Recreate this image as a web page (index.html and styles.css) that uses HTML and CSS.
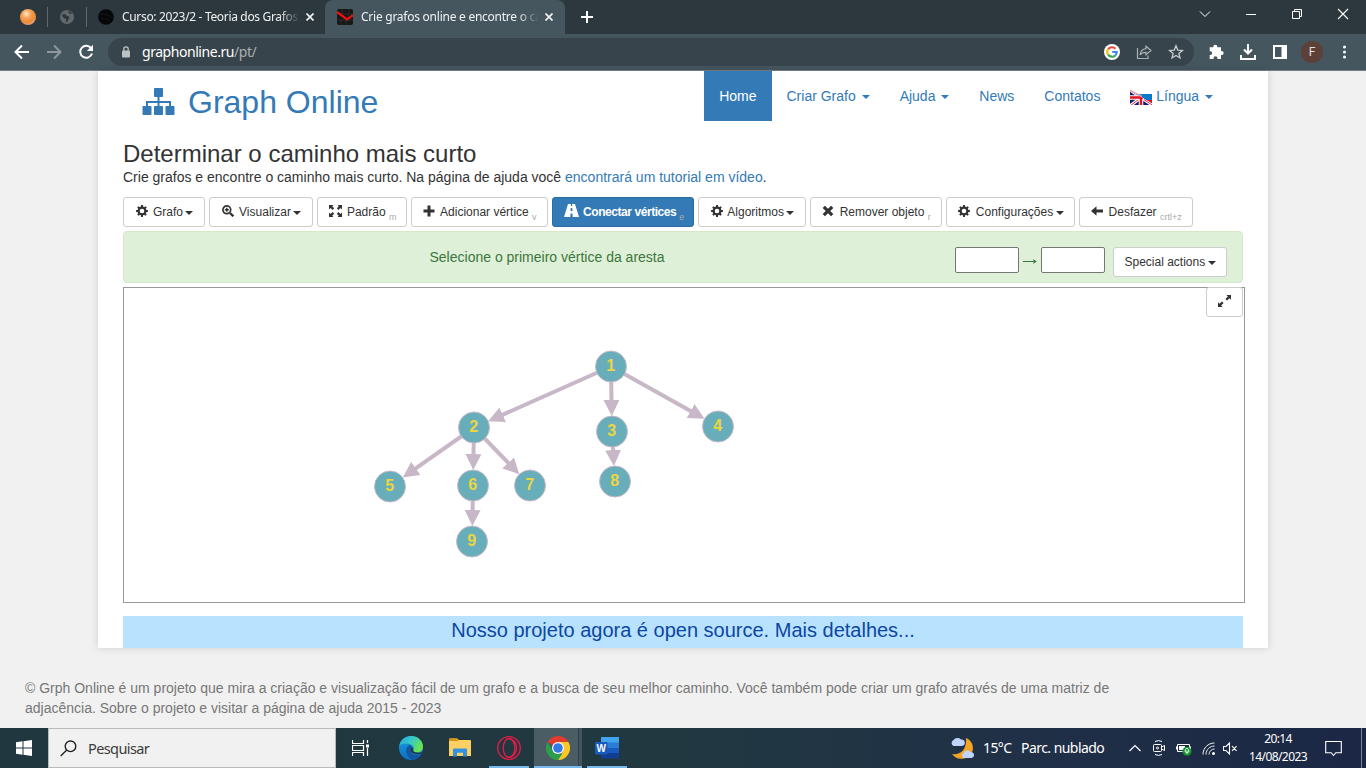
FILE: index.html
```html
<!DOCTYPE html>
<html lang="pt">
<head>
<meta charset="utf-8">
<title>Crie grafos online e encontre o caminho mais curto</title>
<link rel="stylesheet" href="styles.css">
</head>
<body>
<svg class="defs" width="0" height="0">
  <defs>
    <radialGradient id="orb" cx=".4" cy=".3" r=".75"><stop offset="0" stop-color="#ffe9c8"/><stop offset=".35" stop-color="#f6a55c"/><stop offset=".7" stop-color="#f08a35"/><stop offset="1" stop-color="#dda58a"/></radialGradient>
    <linearGradient id="edgeTop" x1="0" y1="0" x2="1" y2=".5"><stop offset="0" stop-color="#1fa8e4"/><stop offset=".5" stop-color="#36c8c8"/><stop offset="1" stop-color="#6be34e"/></linearGradient>
    <linearGradient id="edgeLow" x1="0" y1="0" x2="0" y2="1"><stop offset="0" stop-color="#1b9de2"/><stop offset="1" stop-color="#0c6fc4"/></linearGradient>
    <linearGradient id="ruBlue" x1="0" y1="0" x2="1" y2="0"><stop offset="0" stop-color="#0b78c8" stop-opacity=".2"/><stop offset=".5" stop-color="#0b78c8"/></linearGradient>
    <clipPath id="jack"><path d="M0 2L22 14v2H0z"/></clipPath>
    <symbol id="cog" viewBox="0 0 12 12"><g fill="currentColor"><path fill-rule="evenodd" d="M6 1.6a4.4 4.4 0 1 0 0 8.8 4.4 4.4 0 0 0 0-8.8zm0 2.1a2.3 2.3 0 1 1 0 4.6 2.3 2.3 0 0 1 0-4.6z"/><path d="M5.1.1h1.8l.3 2.2H4.8zM5.1 11.9h1.8l.3-2.2H4.8zM.1 5.1v1.8l2.2.3V4.8zM11.9 5.1v1.8l-2.2.3V4.8zM1.2 2.5l1.3-1.3 1.8 1.4-1.7 1.7zM10.8 2.5L9.5 1.2 7.7 2.6l1.7 1.7zM1.2 9.5l1.3 1.3 1.8-1.4-1.7-1.7zM10.8 9.5l-1.3 1.3-1.8-1.4 1.7-1.7z"/></g></symbol>
  </defs>
</svg>
<div class="screen">
  <header class="tabstrip">
    <div class="pinned"><svg width="16" height="16" viewBox="0 0 16 16"><circle cx="8" cy="8" r="8" fill="url(#orb)"/></svg></div>
    <div class="pinned pinned-globe"><svg width="14" height="14" viewBox="0 0 14 14"><circle cx="7" cy="7" r="7" fill="#62686b"/><path d="M2 4.500l3-.5 2 2 2 .5.500 2-1.500 1-.5 2.500-1.500-.5V9L3 7.500zM7.500 1.500l2 2 2 .5.500-1-2-1.500z" fill="#2d383d"/></svg></div>
    <div class="tab">
      <svg width="16" height="16" viewBox="0 0 16 16"><circle cx="8" cy="8" r="7.800" fill="#050708"/><path d="M2 5Q9 4 14.800 9M3 9Q8 8 12 13" fill="none" stroke="#171d1f" stroke-width=".7"/></svg>
      <span class="tab-title title-course">Curso: 2023/2 - Teoria dos Grafos</span>
      <svg class="tab-x" width="8" height="8" viewBox="0 0 8 8"><path d="M.5.5l7 7m0-7l-7 7" stroke="#f1f3f4" stroke-width="1.700"/></svg>
    </div>
    <div class="tab tab-active">
      <svg width="16" height="16" viewBox="0 0 16 16"><rect width="16" height="16" rx="2" fill="#171717"/><path d="M0 5h16M0 11h16M5 0v5M11 5v6M4 11v5M9 11v5M12 0v5" stroke="#2c2c2c"/><path d="M0 3l10 7.500 6-4.300" fill="none" stroke="#f01010" stroke-width="2.200"/></svg>
      <span class="tab-title title-graph">Crie grafos online e encontre o ca</span>
      <svg class="tab-x" width="8" height="8" viewBox="0 0 8 8"><path d="M.5.5l7 7m0-7l-7 7" stroke="#f1f3f4" stroke-width="1.700"/></svg>
    </div>
    <svg class="new-tab" width="12" height="12" viewBox="0 0 12 12"><path d="M6 0v12M0 6h12" stroke="#fff" stroke-width="2"/></svg>
    <div class="window-controls">
      <svg width="46" height="28" viewBox="0 0 46 28"><path d="M18 11.500l5 5 5-5" fill="none" stroke="#fff"/></svg>
      <svg width="46" height="28" viewBox="0 0 46 28"><path d="M18 14.500h10" stroke="#fff"/></svg>
      <svg width="46" height="28" viewBox="0 0 46 28"><path d="M18.500 11.500h7v7h-7zM20.500 11.500v-2h7v7h-2" fill="none" stroke="#fff"/></svg>
      <svg width="46" height="28" viewBox="0 0 46 28"><path d="M18 9l10 10m0-10L18 19" stroke="#fff" stroke-width="1.100"/></svg>
    </div>
  </header>

  <div class="toolbar">
    <div class="nav-buttons">
      <svg width="16" height="16" viewBox="0 0 16 16"><path d="M15 8H2M8 1.500L1.500 8 8 14.500" fill="none" stroke="#fff" stroke-width="2"/></svg>
      <svg width="16" height="16" viewBox="0 0 16 16"><path d="M1 8h13M8 1.500L14.500 8 8 14.500" fill="none" stroke="#8d979c" stroke-width="2"/></svg>
      <svg width="16" height="16" viewBox="0 0 16 16"><path d="M13.300 4.500A6 6 0 1 0 14 9.500" fill="none" stroke="#fff" stroke-width="2"/><path d="M15 .8V7H8.800z" fill="#fff"/></svg>
    </div>
    <div class="omnibox">
      <svg width="8" height="12" viewBox="0 0 8 12"><path d="M1.800 5V3a2.200 2.200 0 0 1 4.400 0v2" fill="none" stroke="#bdc1c6" stroke-width="1.300"/><rect y="4.500" width="8" height="7" rx="1" fill="#bdc1c6"/></svg>
      <span class="url">graphonline.ru<span class="url-path">/pt/</span></span>
      <div class="omni-actions">
        <svg width="16" height="16" viewBox="0 0 16 16"><circle cx="8" cy="8" r="8" fill="#fff"/><g fill="none" stroke-width="2.200"><path d="M4.150 5.200A4.750 4.750 0 0 1 11.400 4.700" stroke="#ea4335"/><path d="M4.150 5.200a4.750 4.750 0 0 0 0 5.500" stroke="#fbbc05"/><path d="M4.150 10.700a4.750 4.750 0 0 0 7.100.8" stroke="#34a853"/><path d="M11.250 11.500A4.750 4.750 0 0 0 12.750 8H8.200" stroke="#4285f4"/></g></svg>
        <svg width="16" height="16" viewBox="0 0 16 16"><path d="M1.500 4v10.500h10.500V11.500" fill="none" stroke="#a9b0b4" stroke-width="1.200"/><path d="M10 2.200L15 6.500l-5 4.300V8.300C7.500 8.200 5.500 9 4 11 4.500 7.500 6.500 5 10 4.600z" fill="none" stroke="#a9b0b4" stroke-width="1.200"/></svg>
        <svg width="16" height="16" viewBox="0 0 16 16"><path d="M8 1.800l1.750 4.300 4.650.35-3.550 3 1.100 4.500L8 11.500l-3.950 2.450 1.100-4.500-3.550-3 4.650-.35z" fill="none" stroke="#c8cdcf" stroke-width="1.300"/></svg>
      </div>
    </div>
    <div class="ext-actions">
      <svg width="16" height="16" viewBox="0 0 16 16"><path d="M1.700 3.300h3.600V2.700a2 2 0 0 1 4 0v.6H13v3.800h.7a1.950 1.950 0 0 1 0 3.900H13v4H9.500v-.7a2 2 0 0 0-4 0v.7H1.700v-4h.6a1.900 1.900 0 0 0 0-3.800h-.6z" fill="#fff"/></svg>
      <svg width="16" height="16" viewBox="0 0 16 16"><path d="M8 0v9M4 5.500L8 9.500l4-4M1 11v4h14v-4" fill="none" stroke="#fff" stroke-width="2"/></svg>
      <svg width="16" height="16" viewBox="0 0 16 16"><path d="M1 1h14v14H1zM3 3v10h6.500V3z" fill="#fff" fill-rule="evenodd"/></svg>
      <span class="avatar">F</span>
      <svg width="16" height="16" viewBox="0 0 16 16"><g fill="#fff"><circle cx="8.500" cy="3" r="1.500"/><circle cx="8.500" cy="8" r="1.500"/><circle cx="8.500" cy="13" r="1.500"/></g></svg>
    </div>
  </div>

  <main class="page">
    <section class="container">
      <div class="masthead">
        <a class="brand">
          <svg width="33" height="28" viewBox="0 0 33 28"><g fill="#337ab7"><rect x="12" width="9" height="9" rx=".8"/><rect x=".5" y="18" width="9" height="9" rx=".8"/><rect x="12" y="18" width="9" height="9" rx=".8"/><rect x="23.500" y="18" width="9" height="9" rx=".8"/></g><path d="M16.500 8v11M5 19v-5h23v5" fill="none" stroke="#337ab7" stroke-width="2"/></svg>
          <span>Graph Online</span>
        </a>
        <nav class="menu">
          <a class="active">Home</a>
          <a>Criar Grafo <b class="caret"></b></a>
          <a>Ajuda <b class="caret"></b></a>
          <a>News</a>
          <a>Contatos</a>
          <a><svg class="flag" width="22" height="16" viewBox="0 0 22 16"><path d="M3 5h19v6H3z" fill="url(#ruBlue)"/><path d="M10 11h12v5H10z" fill="#e8121c"/><g clip-path="url(#jack)"><path d="M0 0h22v16H0z" fill="#151c72"/><path d="M0 1l22 15M0 17L11 8.500" stroke="#fff" stroke-width="3"/><path d="M0 1l22 15M0 17L11 8.500" stroke="#e32636" stroke-width="1"/><path d="M0 8.500h14M11 6v10" stroke="#fff" stroke-width="4.500"/><path d="M0 8.500h13M11 7v9" stroke="#e3121f" stroke-width="2.500"/></g><path d="M0 1l12 6.500" stroke="#e8a0ab" stroke-width="1.200"/></svg> Língua <b class="caret"></b></a>
        </nav>
      </div>
      <h1>Determinar o caminho mais curto</h1>
      <p class="lead">Crie grafos e encontre o caminho mais curto. Na página de ajuda você <a>encontrará um tutorial em vídeo</a>.</p>

      <div class="actions">
        <button><svg width="12" height="12"><use href="#cog"/></svg> Grafo <b class="caret"></b></button>
        <button><svg width="12" height="12" viewBox="0 0 12 12"><circle cx="4.800" cy="4.800" r="3.900" fill="none" stroke="currentColor" stroke-width="1.700"/><path d="M4.800 2.800v4M2.800 4.800h4" stroke="currentColor" stroke-width="1.500"/><path d="M8 8l3.300 3.300" stroke="currentColor" stroke-width="2.300"/></svg> Visualizar <b class="caret"></b></button>
        <button><svg width="13" height="12" viewBox="0 0 13 12"><path d="M0 0h4.500L3.200 1.300l2 2-1.700 1.700-2-2L0 4.500zM13 0H8.500l1.300 1.300-2 2L9.500 5l2-2L13 4.500zM0 12h4.500l-1.300-1.300 2-2L3.500 7l-2 2L0 7.500zM13 12H8.500l1.300-1.300-2-2L9.500 7l2 2L13 7.500z" fill="currentColor"/></svg> Padrão <sub>m</sub></button>
        <button><svg width="12" height="12" viewBox="0 0 12 12"><path d="M6 .5v11M.5 6h11" stroke="currentColor" stroke-width="3"/></svg> Adicionar vértice <sub>v</sub></button>
        <button class="primary"><svg width="15" height="13" viewBox="0 0 15 13"><path fill="currentColor" fill-rule="evenodd" d="M4 0h2.900l-.1 2h1.400L8.100 0H11l4 13H8.700l-.2-3.500h-2L6.300 13H0zM6.700 4l-.2 3h2l-.2-3z"/></svg> Conectar vértices <sub>e</sub></button>
        <button><svg width="12" height="12"><use href="#cog"/></svg> Algoritmos <b class="caret"></b></button>
        <button><svg width="12" height="12" viewBox="0 0 12 12"><path d="M1.800 1.800l8.400 8.400m0-8.400l-8.400 8.400" stroke="currentColor" stroke-width="3.200"/></svg> Remover objeto <sub>r</sub></button>
        <button><svg width="12" height="12"><use href="#cog"/></svg> Configurações <b class="caret"></b></button>
        <button><svg width="12" height="12" viewBox="0 0 12 12"><path d="M0 6l5.500-4.700v3.200H12v3H5.500v3.200z" fill="currentColor"/></svg> Desfazer <sub>crtl+z</sub></button>
      </div>

      <div class="message">
        <p>Selecione o primeiro vértice da aresta</p>
        <div class="edge-form">
          <input type="text"><svg width="14" height="6" viewBox="0 0 14 6"><path d="M0 3.500h13" stroke="#3c763d"/><path d="M10 1l3.800 2.500L10 6l1-2.500z" fill="#3c763d"/></svg><input type="text">
          <button>Special actions <b class="caret"></b></button>
        </div>
      </div>

      <div class="canvas">
        <svg width="1120" height="314" viewBox="124 288 1120 314">
          <defs><marker id="arrow" markerUnits="userSpaceOnUse" markerWidth="16" markerHeight="16" refX="0.500" refY="8" orient="auto"><path d="M0 0L16 8 0 16z" fill="#c7b7c7"/></marker></defs>
          <g class="edges">
            <path d="M611 366.500L502.300 414.900"/><path d="M611 366.500L611.500 400.500"/><path d="M611 366.500L691 411.300"/><path d="M474 427.500L415.400 468.700"/><path d="M474 427.500L473.500 454.500"/><path d="M474 427.500L508.500 463.200"/><path d="M612 431.500L613.100 450.600"/><path d="M473 485.500L472.600 510.500"/>
          </g>
          <g fill="#68aeba" stroke="#c7b7c7" stroke-width="1">
            <circle cx="611" cy="366.500" r="15.500"/><circle cx="474" cy="427.500" r="15.500"/><circle cx="612" cy="431.500" r="15.500"/><circle cx="718" cy="426.500" r="15.500"/><circle cx="390" cy="486.500" r="15.500"/><circle cx="473" cy="485.500" r="15.500"/><circle cx="530" cy="485.500" r="15.500"/><circle cx="615" cy="481.500" r="15.500"/><circle cx="472" cy="541.500" r="15.500"/>
          </g>
          <g class="labels"><text x="610.600" y="371">1</text><text x="473.600" y="432">2</text><text x="611.600" y="436">3</text><text x="717.600" y="431">4</text><text x="389.600" y="491">5</text><text x="472.600" y="490">6</text><text x="529.600" y="490">7</text><text x="614.600" y="486">8</text><text x="471.600" y="546">9</text></g>
        </svg>
        <button class="fullscreen"><svg width="13" height="12" viewBox="0 0 13 12"><path d="M13 0v4.800l-1.500-1.500L9 5.600 7.400 4l2.500-2.400L8.300 0zM0 12V7.200l1.500 1.500L4 6.400 5.600 8l-2.500 2.400L4.700 12z" fill="currentColor"/></svg></button>
      </div>
      <a class="banner">Nosso projeto agora é open source. Mais detalhes...</a>
    </section>
    <footer>© Grph Online é um projeto que mira a criação e visualização fácil de um grafo e a busca de seu melhor caminho. Você também pode criar um grafo através de uma matriz de adjacência. Sobre o projeto e visitar a página de ajuda 2015 - 2023</footer>
  </main>

  <div class="taskbar">
    <div class="start"><svg width="16" height="16" viewBox="0 0 16 16"><path d="M0 2.200L6.500 1.300V7.500H0zM7.500 1.200L16 0v7.500H7.500zM0 8.500h6.500v6.200L0 13.800zM7.500 8.500H16V16l-8.500-1.200z" fill="#fff"/></svg></div>
    <div class="search"><svg width="17" height="17" viewBox="0 0 17 17"><circle cx="10.500" cy="6.300" r="5.300" fill="none" stroke="#222" stroke-width="1.400"/><path d="M6.500 10.200L.7 16" stroke="#222" stroke-width="1.400"/></svg><span>Pesquisar</span></div>
    <div class="apps">
      <div class="app"><svg width="17" height="16" viewBox="0 0 17 16"><path d="M.5 0v3.500h11V0M.5 16v-3.500h11V16M.5 5.500h11v5H.5zM15.500 0v3M15.500 8v8" fill="none" stroke="#fff" stroke-width="1.200"/><path d="M14 4.500h3v3h-3z" fill="#fff"/></svg></div>
      <div class="app edge"><svg width="24" height="24" viewBox="0 0 24 24"><circle cx="12" cy="12" r="12" fill="url(#edgeLow)"/><path d="M.2 10C1.500 3.500 6.500 0 12 0c7 0 12 5 12 10.500 0 4-3 6-6.500 6-2.700 0-4-1-3.500-2 1.700-1.700 1-5.500-3.500-6.500C6 7 2 8 .2 10z" fill="url(#edgeTop)"/><path d="M10.500 9C5 12 6.500 20 13 23.900c4.500 0 8-2.500 9.500-5.900-4 2-9 1-10.500-2-1-2-.5-3.500.5-5-.6-1.400-1.300-2-2-2z" fill="#1257a0"/><path d="M12.500 11c-1.500 2-1 4.300.5 5.600 2.500 2.100 7 2.100 9.700.9l1.800.5v-2.500c-3 2-9.500 1.500-10.500-1 .6-1 0-2.500-1.500-3.500z" fill="#203840"/></svg></div>
      <div class="app explorer"><svg width="22" height="19" viewBox="0 0 22 19"><path d="M0 1.500Q0 .5 1 .5h7l2 1.500h11q1 0 1 1V18H0z" fill="#fdd063"/><path d="M0 1.500Q0 .5 1 .5h7l1.500 2.500H0z" fill="#dd9510"/><path d="M4 18.500v-7q0-1 1-1h12q1 0 1 1v7h-4v-3.700H8v3.700z" fill="#3292df"/></svg></div>
      <div class="app running"><svg width="24" height="24" viewBox="0 0 24 24"><g fill="none" stroke="#e61c46" stroke-width="1.300"><circle cx="12" cy="12" r="11.300"/><ellipse cx="12" cy="12" rx="5.800" ry="9.300"/><path d="M10 2.900C15 1.500 19.500 6 19.500 12S15 22.500 10 21.100"/></g></svg></div>
      <div class="app current"><svg width="24" height="24" viewBox="0 0 24 24"><path d="M12 12L1.600 6A12 12 0 0 1 22.400 6z" fill="#e33b2e"/><path d="M12 6h10.400A12 12 0 0 1 12 24l5.200-9z" fill="#fdc824"/><path d="M1.600 6L6.800 15 12 18l4 .2L12 24A12 12 0 0 1 1.600 6z" fill="#2c9d48"/><circle cx="12" cy="12" r="6" fill="#fff"/><circle cx="12" cy="12" r="4.800" fill="#3479e8"/></svg></div>
      <div class="app running word"><svg width="24" height="22" viewBox="0 0 24 22"><path d="M6 0h18v6H6z" fill="#41a5ee"/><path d="M6 5.500h18V11H6z" fill="#2b7cd3"/><path d="M6 11h18v5.500H6z" fill="#185abd"/><path d="M6 16h18v5.500H6z" fill="#103f91"/><rect y="5" width="12.500" height="12.500" rx="1" fill="#185abd"/><text x="6.300" y="15" class="word-mark">W</text></svg></div>
    </div>
    <div class="tray">
      <svg class="weather" width="25" height="23" viewBox="0 0 25 23"><path d="M16 1c10 4 9 18-2 20.500-6 1.200-10-1.500-12-4.500 8 1.500 15-4 14-16z" fill="#f5a524"/><path d="M3.500 9a3.300 3.300 0 0 1 0-6A5 5 0 0 1 11 2.500 3.200 3.200 0 0 1 12 9zM13.500 21a3 3 0 0 1 0-5 4 4 0 0 1 7-1 3 3 0 0 1 1 6z" fill="#c0d4fb"/></svg>
      <span class="temp">15°C</span><span class="condition">Parc. nublado</span>
      <svg class="tray-up" width="12" height="8" viewBox="0 0 12 8"><path d="M.5 7L6 1.500 11.500 7" fill="none" stroke="#fff" stroke-width="1.200"/></svg>
      <svg class="tray-cam" width="12" height="16" viewBox="0 0 12 16"><path d="M1.500 4.500h6q1 0 1 1v5q0 1-1 1h-6q-1 0-1-1v-5q0-1 1-1zM8.500 7l3-1.500v5L8.500 9M2 1.500Q5.500-.3 9 1.500M2 14.500q3.500 1.800 7 0" fill="none" stroke="#fff"/><circle cx="4.500" cy="8" r="1" fill="none" stroke="#fff"/></svg>
      <svg class="tray-battery" width="16" height="13" viewBox="0 0 16 13"><path d="M1.500 1.500h12v7h-12z" fill="none" stroke="#fff"/><path d="M3 3h6v4H3zM0 3.500h1v3H0zM14 3.500h1v3h-1z" fill="#fff"/><circle cx="11" cy="8.200" r="4.500" fill="#14962d"/><path d="M11 11V7.500M9 8.500Q9 6.500 11 5q2 1.500 2 3.500l-2 1.200z" fill="none" stroke="#fff" stroke-width=".9"/></svg>
      <svg class="tray-wifi" width="14" height="13" viewBox="0 0 14 13"><g fill="none" stroke="#e8ecef"><path d="M1 12.500C1 6 6 1 12.500 1M4 12.500C4 7.500 8 4 12.500 4M7 12.500C7 9.500 9.500 7 12.500 7" /></g><circle cx="11.500" cy="11.500" r="1.500" fill="#fff"/></svg>
      <svg class="tray-sound" width="15" height="13" viewBox="0 0 15 13"><path d="M.5 4.500H3L6.500 1v11L3 8.500H.5zM9 4.200l4.600 4.600m0-4.600L9 8.800" fill="none" stroke="#fff" stroke-width="1.100"/></svg>
      <div class="clock"><span>20:14</span><span>14/08/2023</span></div>
      <svg class="notice" width="17" height="17" viewBox="0 0 17 17"><path d="M.7 1.500h15.600v11.200h-5.500L8.500 15.500l-2.300-2.800H.7z" fill="none" stroke="#fff" stroke-width="1.100"/></svg>
      <i class="desktop-edge"></i>
    </div>
  </div>
</div>
</body>
</html>
```
FILE: styles.css
```css
* { box-sizing: border-box; }
body { margin: 0; font-family: "Liberation Sans", Arial, sans-serif; font-size: 14px; line-height: 20px; color: #333; overflow: hidden; }
svg { display: block; flex: none; }
p, h1 { margin: 0; font-weight: normal; }
a { color: #337ab7; }
.defs { position: absolute; }
.screen { width: 1366px; height: 768px; display: flex; flex-direction: column; background: #f1f1f1; overflow: hidden; }

/* Browser window */
.tabstrip { height: 34px; flex: none; display: flex; background: #2d383e; font: 12px/16px "Noto Sans", sans-serif; color: #eef1f2; }
.pinned { width: 39px; height: 20px; margin-top: 7px; display: flex; align-items: center; justify-content: center; border-right: 1px solid #61686c; }
.pinned:first-child { width: 48px; padding-left: 9px; }
.tab { display: flex; align-items: center; padding-left: 11px; width: 238px; }
.tab-active { width: 240px; padding-left: 12px; background: #45565f; border-radius: 8px 8px 0 0; }
.tab-title { width: 178px; margin-left: 8px; white-space: nowrap; mask-image: linear-gradient(90deg, #000 88%, transparent); }
.title-course { letter-spacing: -.33px; }
.title-graph { letter-spacing: -.25px; }
.tab-x { margin-left: 6px; }
.new-tab { margin: 11px 0 0 16px; }
.window-controls { display: flex; margin-left: auto; }
.toolbar { height: 37px; flex: none; display: flex; align-items: center; background: #45565f; border-bottom: 1px solid #748087; }
.nav-buttons { width: 108px; display: flex; gap: 16px; padding-left: 14px; }
.omnibox { width: 1086px; height: 28px; border-radius: 14px; background: #38444b; display: flex; align-items: center; padding-left: 14px; }
.url { margin-left: 12px; font: 14px/20px "Noto Sans", sans-serif; letter-spacing: -.45px; color: #fff; }
.url-path { color: #a9b0b4; }
.omni-actions { display: flex; gap: 16px; margin-left: auto; padding-right: 10px; }
.ext-actions { display: flex; align-items: center; gap: 16px; margin-left: 14px; }
.avatar { width: 22px; height: 22px; margin: 0 -3px; border-radius: 50%; background: #5d4037; color: #e5e0de; font: 12px/22px Roboto, sans-serif; text-align: center; }

/* Page */
.page { height: 657px; flex: none; }
.container { width: 1170px; height: 577px; margin: 0 auto; padding: 0 25px; background: #fff; box-shadow: 0 0 8px rgba(0, 0, 0, .15); }
.masthead { height: 71px; display: flex; justify-content: space-between; align-items: flex-start; padding: 0 15px 0 19px; }
.brand { display: flex; gap: 13px; padding-top: 17px; font-size: 32px; line-height: 28px; }
.menu { display: flex; }
.menu a { height: 50px; padding: 15px; white-space: nowrap; }
.menu .active { background: #337ab7; color: #fff; }
.caret { display: inline-block; margin-left: 2px; vertical-align: middle; border-top: 4px solid; border-right: 4px solid transparent; border-left: 4px solid transparent; }
.flag { display: inline-block; vertical-align: -4px; }
h1 { font-size: 24px; line-height: 24px; }
.lead { line-height: 20px; margin-top: 1px; }
.actions { display: grid; grid-template-columns: 82px 104px 90px 137px 142px 108px 132px 129px 114px; gap: 4px; margin-top: 10px; }
button { height: 30px; padding: 0; border: 1px solid #ccc; border-radius: 3px; background: #fff; color: #333; font: 12px/18px "Liberation Sans", Arial, sans-serif; white-space: nowrap; }
button svg { display: inline-block; vertical-align: -1px; margin-right: 2px; }
button .caret { margin-left: -1px; }
.actions button { padding-left: 1px; }
.actions .primary { padding-left: 2px; background: #337ab7; border-color: #2e6da4; color: #fff; font-weight: bold; letter-spacing: -.44px; }
.primary svg { margin-right: 1px; }
sub { font-size: 9px; font-weight: normal; line-height: 0; color: #aaa; vertical-align: -4px; }
.message { height: 52px; display: flex; justify-content: space-between; margin-top: 4px; padding: 15px 15px 0 305.5px; border: 1px solid #d6e9c6; border-radius: 4px; background: #dff0d8; color: #3c763d; }
.edge-form { display: flex; align-items: flex-start; }
.edge-form input { width: 64px; height: 26px; border: 1px solid #767676; border-radius: 2px; background: #fff; }
.edge-form svg { margin: 11px 4px 0; }
.edge-form button { width: 114px; margin-left: 8px; }
.canvas { position: relative; width: 1122px; height: 316px; margin-top: 4px; border: 1px solid #999; }
.edges path { stroke: #c7b7c7; stroke-width: 4px; marker-end: url(#arrow); }
.labels { fill: #ecd53f; font: bold 16px "Liberation Sans", Arial, sans-serif; text-anchor: middle; }
.fullscreen { position: absolute; top: -1px; right: 1px; width: 37px; padding-left: 1px; }
.banner { display: block; height: 32px; margin-top: 13px; background: #b9e2ff; color: #0d47a1; font-size: 20px; line-height: 28px; text-align: center; }
footer { width: 1140px; padding: 30px 25px 0; color: #777; }

/* Taskbar */
.taskbar { height: 40px; flex: none; display: flex; background: linear-gradient(90deg, #20373f, #213841 50%, #203047 75%, #1b2745); color: #fff; font-family: "Noto Sans", sans-serif; }
.start { width: 48px; display: grid; place-items: center; }
.search { width: 288px; border: 1px solid #b9b9b9; background: #f1f1f1; display: flex; align-items: center; padding-left: 11px; color: #3b3b3b; font-size: 14.500px; letter-spacing: -.6px; }
.search span { margin-left: 11px; padding-bottom: 1px; }
.apps { display: flex; }
.app { width: 50px; display: grid; place-items: center; padding-bottom: 1px; }
.app:first-child { width: 48px; }
.app.edge { width: 54px; }
.app.explorer { width: 46px; padding-right: 2px; }
.running { background: linear-gradient(#76b9ed, #76b9ed) center bottom / 40px 2px no-repeat; }
.current { width: 48px; background: linear-gradient(#76b9ed, #76b9ed) bottom / 100% 2px no-repeat, linear-gradient(90deg, #4a5c64 44px, #303f47 44px, #303f47 45px, #43545c 45px); }
.word-mark { fill: #fff; font: bold 10px "Liberation Sans", Arial, sans-serif; text-anchor: middle; }
.tray { display: flex; align-items: center; margin-left: auto; width: 416px; font-size: 14px; white-space: nowrap; }
.temp { width: 31px; margin-left: 8px; letter-spacing: -.6px; }
.condition { width: 86px; margin-left: 7px; letter-spacing: -.55px; }
.tray-up { margin-left: 22px; }
.tray-cam { margin-left: 12px; }
.tray-battery { margin: 2px 0 0 11px; }
.tray-wifi { margin: 1px 0 0 10px; }
.tray-sound { margin-left: 7px; }
.clock { width: 64px; margin-left: 8px; display: flex; flex-direction: column; text-align: center; font-size: 12px; line-height: 18px; letter-spacing: -.6px; }
.notice { margin-left: 15px; }
.desktop-edge { height: 40px; margin-left: 19px; border-left: 1px solid #7c8493; }
```
